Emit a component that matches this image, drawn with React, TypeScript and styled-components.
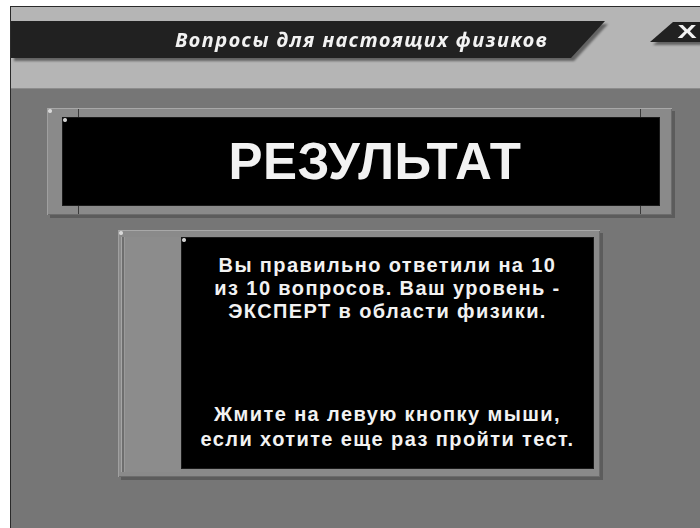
import styled, { createGlobalStyle } from "styled-components";

const GlobalStyle = createGlobalStyle`
  html, body {
    margin: 0;
    padding: 0;
    background: #fff;
  }
  body {
    font-family: "Liberation Sans", Arial, sans-serif;
  }
`;

const Window = styled.div`
  width: 700px;
  height: 528px;
  box-sizing: border-box;
  padding: 6px 0 0 10px;
  background: #fff;
  overflow: hidden;
`;

const Screen = styled.div`
  height: 100%;
  display: flex;
  flex-direction: column;
  border-top: 1px solid #2a2a2a;
  border-left: 1px solid #2a2a2a;
  background: #767676;
`;

const Header = styled.header`
  flex: none;
  height: 82px;
  box-sizing: border-box;
  padding-top: 14px;
  display: flex;
  align-items: flex-start;
  justify-content: space-between;
  background: #b5b5b5;
  border-bottom: 1px solid #8c8c8c;
`;

const Shadowed = styled.div`
  filter: drop-shadow(3px 3px 1px rgba(0, 0, 0, 0.45));
`;

const TitleBar = styled.div`
  width: 594px;
  height: 37px;
  box-sizing: border-box;
  padding-left: 164px;
  background: #212121;
  clip-path: polygon(0 0, 100% 0, calc(100% - 34px) 100%, 0 100%);
  color: #f2f2f2;
  font-family: "Noto Sans", "Open Sans", sans-serif;
  font-style: italic;
  font-weight: 700;
  font-size: 20px;
  letter-spacing: 1.5px;
  line-height: 37px;
  white-space: nowrap;
`;

const CloseButton = styled.div`
  width: 50px;
  height: 20px;
  margin-top: 1px;
  box-sizing: border-box;
  padding-left: 31px;
  background: #212121;
  clip-path: polygon(23px 0, 100% 0, 100% 100%, 0 100%);
  color: #f2f2f2;
  font-family: "Liberation Sans", Arial, sans-serif;
  font-weight: 700;
  font-size: 18px;
  line-height: 21px;
`;

const CloseGlyph = styled.span`
  display: inline-block;
  transform: scaleX(1.6);
`;

const Main = styled.main`
  flex: 1;
  display: flex;
  flex-direction: column;
  align-items: flex-start;
  padding: 19px 0 0 36px;
`;

/* raised grey frame around a black display; thin seams cut the top and bottom strips */
const Frame = styled.div<{ $w: number; $h: number; $seam?: boolean }>`
  width: ${(p) => p.$w}px;
  height: ${(p) => p.$h}px;
  box-sizing: border-box;
  display: flex;
  background-color: #8a8a8a;
  background-image: ${(p) =>
    p.$seam
      ? `linear-gradient(to right, transparent 30px, #3a3a3a 30px, #3a3a3a 31px, transparent 31px),
         linear-gradient(to left, transparent 31px, #3a3a3a 31px, #3a3a3a 32px, transparent 32px),
         radial-gradient(circle at 2px 2px, #d8d8d8 1.5px, transparent 2.5px)`
      : `radial-gradient(circle at 2px 2px, #d8d8d8 1.5px, transparent 2.5px)`};
  border-top: 1px solid #a8a8a8;
  border-left: 1px solid #a0a0a0;
  box-shadow: 3px 3px 0 #5c5c5c, inset -1px -1px 0 #6c6c6c;
`;

const ResultFrame = styled(Frame)`
  padding: 8px 12px 9px 14px;
`;

const InfoFrame = styled(Frame)`
  margin-top: 15px;
  margin-left: 71px;
  padding: 6px 6px 8px 2px;
`;

const SideColumn = styled.div`
  width: 59px;
  flex: none;
  margin-bottom: -3px;
  background: #8c8c8c;
  border-left: 1px solid #a6a6a6;
  box-shadow: inset 2px 0 0 #6e6e6e, inset 3px 0 0 #9a9a9a;
`;

const Display = styled.div`
  flex: 1;
  background-color: #000;
  background-image: radial-gradient(circle at 3px 3px, #cfcfcf 1.5px, transparent 2.5px);
  box-shadow: inset 0 0 0 1px #1a1a1a;
  color: #f2f2f2;
  font-weight: 700;
`;

const ResultDisplay = styled(Display)`
  display: flex;
  align-items: center;
  justify-content: center;
  padding-left: 28px;
  font-size: 51px;
  letter-spacing: 0.5px;
`;

const InfoDisplay = styled(Display)`
  display: flex;
  flex-direction: column;
  align-items: center;
  padding-top: 17px;
  font-size: 20px;
  letter-spacing: 1.4px;
  text-align: center;
`;

const Paragraph = styled.p<{ $gap?: number; $lh: number }>`
  margin: ${(p) => p.$gap ?? 0}px 0 0;
  line-height: ${(p) => p.$lh}px;
`;

export default function App() {
  return (
    <>
      <GlobalStyle />
      <Window>
        <Screen>
          <Header>
            <Shadowed>
              <TitleBar>Вопросы для настоящих физиков</TitleBar>
            </Shadowed>
            <Shadowed>
              <CloseButton>
                <CloseGlyph>X</CloseGlyph>
              </CloseButton>
            </Shadowed>
          </Header>
          <Main>
            <ResultFrame $w={625} $h={107} $seam>
              <ResultDisplay>РЕЗУЛЬТАТ</ResultDisplay>
            </ResultFrame>
            <InfoFrame $w={482} $h={247}>
              <SideColumn />
              <InfoDisplay>
                <Paragraph $lh={23}>
                  Вы правильно ответили на 10
                  <br />
                  из 10 вопросов. Ваш уровень -
                  <br />
                  ЭКСПЕРТ в области физики.
                </Paragraph>
                <Paragraph $gap={79} $lh={25}>
                  Жмите на левую кнопку мыши,
                  <br />
                  если хотите еще раз пройти тест.
                </Paragraph>
              </InfoDisplay>
            </InfoFrame>
          </Main>
        </Screen>
      </Window>
    </>
  );
}
